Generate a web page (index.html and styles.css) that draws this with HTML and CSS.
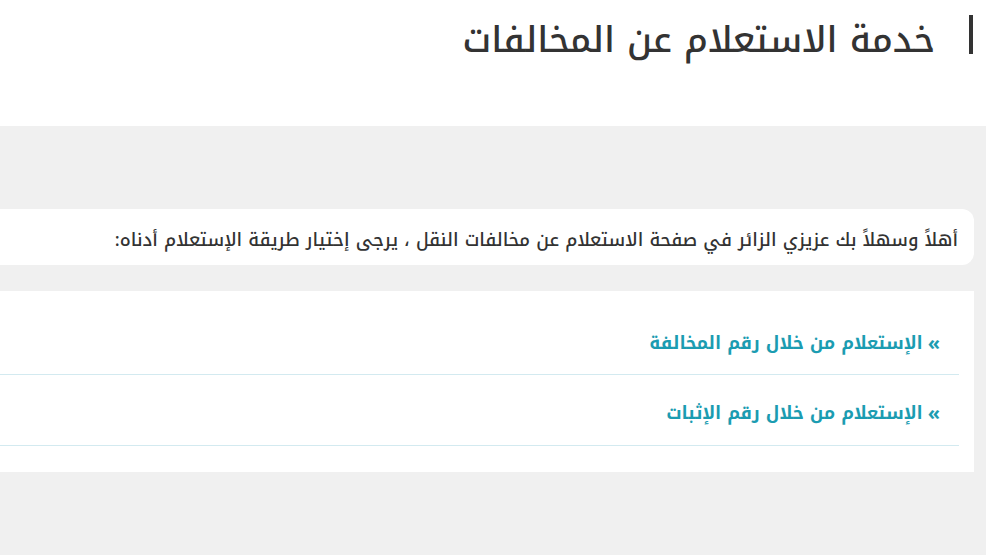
FILE: index.html
```html
<!DOCTYPE html>
<html lang="ar" dir="rtl">
<head>
<meta charset="utf-8">
<title>خدمة الاستعلام عن المخالفات</title>
<link rel="stylesheet" href="styles.css">
</head>
<body>
<header class="top">
  <h1 class="title">خدمة الاستعلام عن المخالفات</h1>
</header>
<main class="content">
  <div class="welcome">أهلاً وسهلاً بك عزيزي الزائر في صفحة الاستعلام عن مخالفات النقل ، يرجى إختيار طريقة الإستعلام أدناه:</div>
  <div class="links">
    <a class="link-row" href="#"><span class="arrow">»</span> الإستعلام من خلال رقم المخالفة</a>
    <a class="link-row" href="#"><span class="arrow">»</span> الإستعلام من خلال رقم الإثبات</a>
  </div>
</main>
</body>
</html>
```

FILE: styles.css
```css
html, body {
  margin: 0;
  padding: 0;
}
body {
  width: 986px;
  height: 555px;
  overflow: hidden;
  background: #f0f0f0;
  font-family: "Noto Kufi Arabic", "DejaVu Sans", sans-serif;
  direction: rtl;
}
.top {
  background: #ffffff;
  height: 126px;
  padding: 15px 13px 0 0;
  box-sizing: border-box;
}
.title {
  margin: 0;
  font-size: 35.6px;
  font-weight: 500;
  color: #333333;
  border-right: 4px solid #333333;
  padding-right: 34px;
  height: 39px;
  line-height: 50px;
  display: inline-block;
}
.content {
  padding: 83px 12px 0 0;
  margin-left: -40px;
}
.welcome {
  background: #ffffff;
  border-radius: 12px;
  height: 56px;
  box-sizing: border-box;
  display: flex;
  align-items: center;
  padding: 5px 16px 0 0;
  font-size: 18.1px;
  font-weight: 500;
  color: #333333;
  white-space: nowrap;
}
.links {
  margin-top: 26px;
  background: #ffffff;
  padding: 13px 15px 26px 0;
  display: flex;
  flex-direction: column;
}
.link-row {
  display: flex;
  align-items: center;
  height: 71px;
  padding-top: 8px;
  border-bottom: 1px solid #d3eaf0;
  color: #1b9cb1;
  font-weight: 700;
  font-size: 17.8px;
  text-decoration: none;
  padding-right: 19px;
  box-sizing: border-box;
  gap: 5px;
  white-space: nowrap;
}
.link-row + .link-row {
  padding-top: 6px;
}
.arrow {
  font-weight: 700;
  font-size: 20px;
}
```
